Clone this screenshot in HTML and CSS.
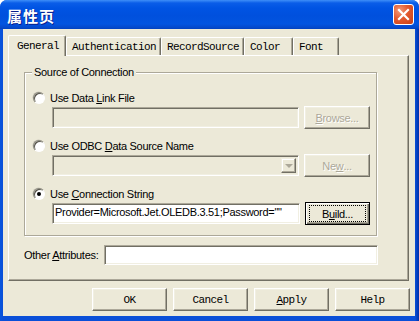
FILE: index.html
```html
<!DOCTYPE html>
<html lang="zh-CN">
<head>
    <meta charset="UTF-8">
    <title>属性页</title>
    <link rel="stylesheet" href="styles.css">
</head>
<body>

    <div class="window">
        <div class="titlebar">
            <span class="title">属性页</span>
            <div class="close">
                <svg width="13" height="13" viewBox="0 0 13 13">
                    <path d="M2 2 L11 11 M11 2 L2 11" stroke="#fff" stroke-width="2.2" stroke-linecap="square"/>
                </svg>
            </div>
        </div>

        <div class="client">
            <div class="tabs">
                <div class="tab active tab-general">General</div>
                <div class="tab tab-auth">Authentication</div>
                <div class="tab tab-record">RecordSource</div>
                <div class="tab tab-color">Color</div>
                <div class="tab tab-font">Font</div>
            </div>

            <div class="panel">
                <div class="group">
                    <span class="legend">Source of Connection</span>

                    <div class="radio-row first">
                        <span class="radio"></span>
                        <span>Use Data <u>L</u>ink File</span>
                    </div>
                    <div class="field-row">
                        <div class="field disabled"></div>
                        <div class="btn disabled"><u>B</u>rowse...</div>
                    </div>

                    <div class="radio-row">
                        <span class="radio"></span>
                        <span>Use ODBC <u>D</u>ata Source Name</span>
                    </div>
                    <div class="field-row">
                        <div class="field disabled combo">
                            <span class="drop"><span class="arrow"></span></span>
                        </div>
                        <div class="btn disabled">Ne<u>w</u>...</div>
                    </div>

                    <div class="radio-row">
                        <span class="radio checked"></span>
                        <span>Use <u>C</u>onnection String</span>
                    </div>
                    <div class="field-row">
                        <div class="field">Provider=Microsoft.Jet.OLEDB.3.51;Password=""</div>
                        <div class="btn default"><span class="focus">B<u>u</u>ild...</span></div>
                    </div>
                </div>

                <div class="attr-row">
                    <span class="attr-label">Other <u>A</u>ttributes:</span>
                    <div class="field attr-field"></div>
                </div>
            </div>

            <div class="buttons">
                <div class="btn mono">OK</div>
                <div class="btn mono">Cancel</div>
                <div class="btn mono"><u>A</u>pply</div>
                <div class="btn mono">Help</div>
            </div>
        </div>
    </div>

</body>
</html>
```

FILE: styles.css
```css
* { margin: 0; padding: 0; box-sizing: border-box; }
body {
    width: 419px; height: 321px; overflow: hidden; background: #fff;
    font-family: "Liberation Sans", Arial, sans-serif; font-size: 11px; color: #000;
    letter-spacing: -0.3px;
}

/* window frame */
.window {
    width: 419px; height: 321px; display: flex; flex-direction: column;
    background: linear-gradient(to right, #0855DD 0, #0A4FD8 3px, #0A4FD8 calc(100% - 4px), #0030A8 100%);
    border-radius: 7px 7px 0 0; overflow: hidden;
}
.titlebar {
    height: 29px; flex: none; display: flex; align-items: center; justify-content: space-between;
    padding: 0 5px 0 7px;
    background: linear-gradient(to bottom, #3E8FF8 0, #0A5DE8 3px, #0054E3 8px, #0050DD 16px, #0254E0 24px, #0447C8 28px, #0040BE 29px);
}
.title {
    color: #fff; font: bold 15px "Noto Sans CJK SC", sans-serif; letter-spacing: 1px;
    text-shadow: 1px 1px #0A1E8C; margin-top: 1px;
}
.close {
    width: 21px; height: 21px; border: 1px solid #fff; border-radius: 3px;
    display: flex; align-items: center; justify-content: center;
    background: radial-gradient(circle at 30% 30%, #F39A78 0, #E2592F 45%, #C83F14 100%);
}

/* client area */
.client {
    flex: 1; margin: 0 4px 5px 3px; background: #ECE9D8;
    padding: 8px 6px 5px 5px; display: flex; flex-direction: column;
}

.tabs {
    height: 18px; display: flex; align-items: flex-end; padding-left: 2px; position: relative; z-index: 1;
}
.tab {
    height: 18px; font: 11px "Liberation Mono", "Courier New", monospace; letter-spacing: -0.6px;
    display: flex; align-items: center; padding-left: 5px; padding-top: 1px;
    background: #ECE9D8; border-top: 1px solid #fff; border-left: 1px solid #fff;
    border-right: 1px solid #716F64; box-shadow: inset -1px 0 #ACA899;
    border-radius: 2px 2px 0 0;
}
.tab.active {
    height: 21px; margin: 0 0 -1px -2px; padding-left: 8px; padding-bottom: 2px;
    position: relative; z-index: 2;
}
.tab-general { width: 58px; }
.tab-auth { width: 95px; }
.tab-record { width: 83px; }
.tab-color { width: 49px; }
.tab-font { width: 46px; }

.panel {
    height: 226px; flex: none; padding: 16px 0 0 15px;
    border-top: 1px solid #fff; border-left: 1px solid #fff;
    border-right: 1px solid #716F64; border-bottom: 1px solid #716F64;
    box-shadow: inset -1px -1px #ACA899;
}

/* group box */
.group {
    width: 353px; position: relative; padding: 18px 6px 10px 8px;
    border: 1px solid #ACA899; box-shadow: inset 1px 1px #fff, 1px 1px #fff;
}
.legend {
    position: absolute; top: -7px; left: 7px; padding: 0 2px; background: #ECE9D8; line-height: 13px;
}
.radio-row { height: 14px; display: flex; align-items: center; gap: 5px; margin-top: 10px; }
.radio-row.first { margin-top: 0; }
.radio {
    width: 12px; height: 12px; border-radius: 50%; background: #fff; flex: none;
    border: 1px solid; border-color: #8A887C #fff #fff #8A887C;
    box-shadow: inset 1px 1px #55534A, -0.5px -0.5px 0 #C9C6B8;
    display: flex; align-items: center; justify-content: center;
}
.radio.checked::after {
    content: ""; width: 4px; height: 4px; border-radius: 50%; background: #000;
}
.field-row { height: 23px; display: flex; align-items: center; gap: 5px; margin-top: 1px; padding-left: 19px; }

.field {
    height: 21px; flex: 1; background: #fff; line-height: 17px; padding-left: 2px; white-space: nowrap; overflow: hidden;
    border: 1px solid; border-color: #ACA899 #fff #fff #ACA899;
    box-shadow: inset 1px 1px #716F64, inset -1px -1px #F1EFE2;
}
.field.disabled { background: #ECE9D8; }
.combo { display: flex; justify-content: flex-end; padding: 2px; }
.drop {
    width: 15px; height: 15px; display: flex; align-items: center; justify-content: center;
    border: 1px solid; border-color: #F1EFE2 #716F64 #716F64 #F1EFE2; box-shadow: inset -1px -1px #ACA899, inset 1px 1px #fff;
}
.arrow { width: 0; height: 0; border: 4px solid transparent; border-top: 4px solid #ACA899; border-bottom: 0; }

/* buttons */
.btn {
    width: 66px; height: 23px; flex: none; display: flex; align-items: center; justify-content: center;
    background: #ECE9D8; border: 1px solid; border-color: #fff #716F64 #716F64 #fff;
    box-shadow: inset -1px -1px #ACA899, inset 1px 1px #F1EFE2;
}
.btn.disabled { color: #ACA899; text-shadow: 1px 1px #fff; }
.btn.default {
    width: 65px; border: 1px solid #000;
    box-shadow: inset 1px 1px #fff, inset -1px -1px #716F64, inset -2px -2px #ACA899;
}
.focus { border: 1px dotted #000; width: 57px; height: 17px; display: flex; align-items: center; justify-content: center; }

.attr-row { display: flex; align-items: center; margin-top: 9px; width: 354px; }
.attr-label { width: 80px; }
.attr-field { height: 20px; }

.buttons { display: flex; justify-content: flex-end; gap: 6px; margin-top: 7px; margin-right: -1px; }
.btn.mono { width: 75px; font: 11px "Liberation Mono", "Courier New", monospace; letter-spacing: -0.6px; padding-top: 1px; }
```
